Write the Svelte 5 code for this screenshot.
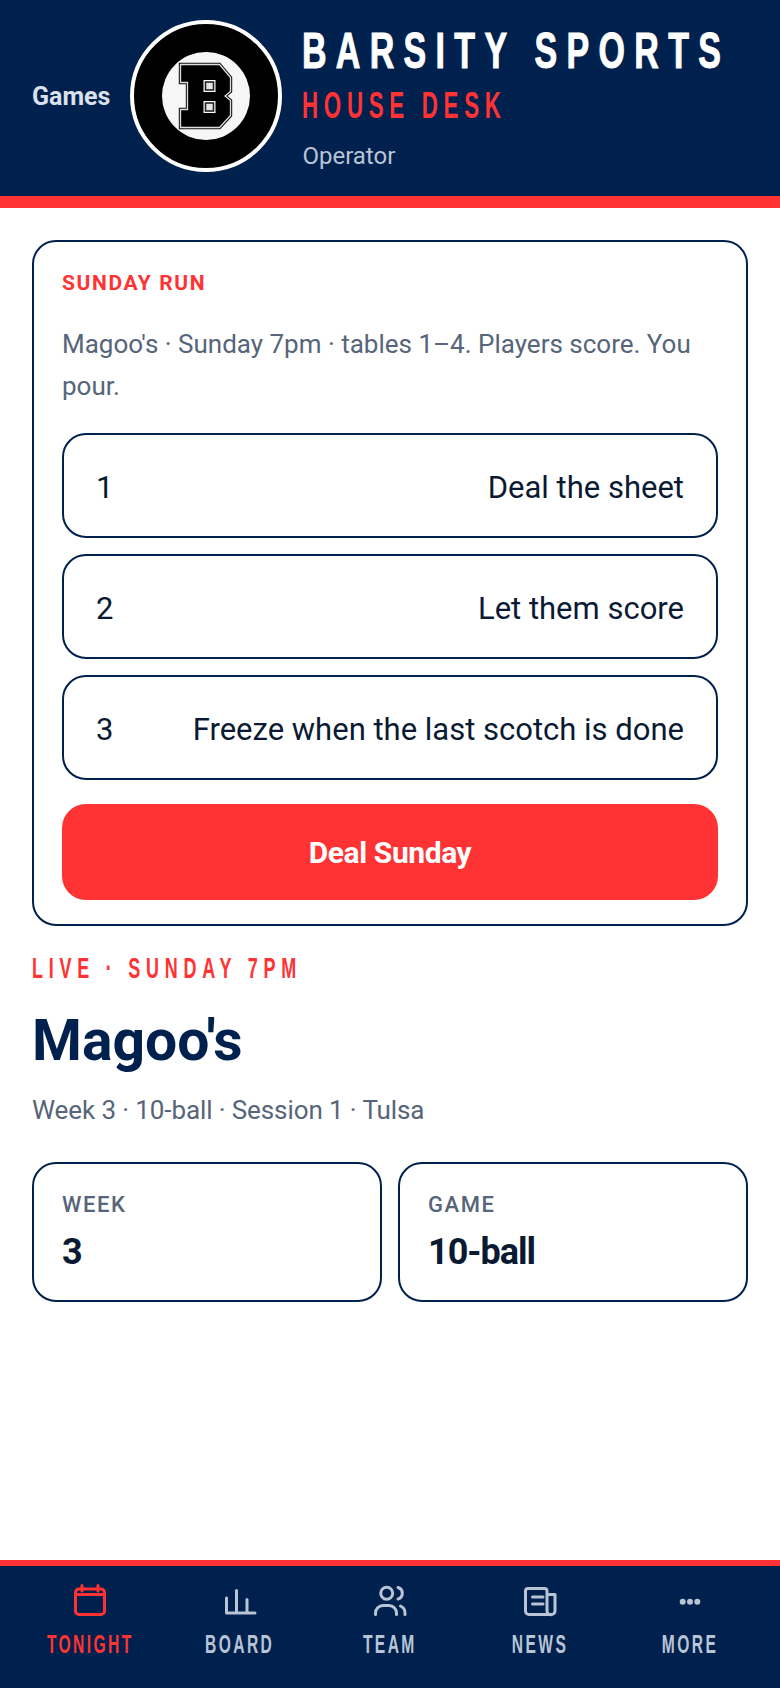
<script lang="ts">
	let steps = [
		{ n: '1', text: 'Deal the sheet' },
		{ n: '2', text: 'Let them score' },
		{ n: '3', text: 'Freeze when the last scotch is done' }
	];
	let stats = [
		{ label: 'WEEK', value: '3' },
		{ label: 'GAME', value: '10-ball' }
	];
	const bPath = 'M0 0H39L50 13V27L44.5 31.500L50 36V51L39 63H0V45H7V18H0Z';
</script>

<div class="page">
	<header class="top">
		<a class="back" href="/">Games</a>
		<div class="logo">
			<div class="logo-inner">
				<svg width="56" height="68" viewBox="-2.5 -2.5 56 68">
					<path class="b-edge" d={bPath} />
					<path class="b-line" d={bPath} />
					<rect class="hole-a" x="23" y="15.5" width="12" height="12" />
					<rect class="hole-b" x="24.2" y="16.7" width="9.6" height="9.6" />
					<rect class="hole-c" x="25.8" y="18.3" width="6.4" height="6.4" />
					<rect class="hole-a" x="23" y="36.5" width="12" height="12" />
					<rect class="hole-b" x="24.2" y="37.7" width="9.6" height="9.6" />
					<rect class="hole-c" x="25.8" y="39.3" width="6.4" height="6.4" />
				</svg>
			</div>
		</div>
		<div class="brand">
			<div class="title">BARSITY SPORTS</div>
			<div class="sub">HOUSE DESK</div>
			<div class="role">Operator</div>
		</div>
	</header>

	<main class="content">
		<section class="card">
			<div class="eyebrow">SUNDAY RUN</div>
			<p class="lede">Magoo's · Sunday 7pm · tables 1–4. Players score. You pour.</p>
			<div class="steps">
				{#each steps as step}
					<div class="step">
						<span>{step.n}</span>
						<span>{step.text}</span>
					</div>
				{/each}
			</div>
			<button class="cta">Deal Sunday</button>
		</section>

		<div class="live">LIVE · SUNDAY 7PM</div>
		<h1 class="venue">Magoo's</h1>
		<p class="meta">Week 3 · 10-ball · Session 1 · Tulsa</p>

		<div class="stats">
			{#each stats as stat}
				<div class="stat">
					<div class="stat-label">{stat.label}</div>
					<div class="stat-value">{stat.value}</div>
				</div>
			{/each}
		</div>
	</main>

	<nav class="tabs">
		<a class="tab active" href="/">
			<svg viewBox="0 0 36 36"><rect x="3.5" y="7" width="29" height="25.5" rx="3.5" /><path d="M3.5 12.5H32.5M10 3.5V9M26 3.5V9" /></svg>
			<span>TONIGHT</span>
		</a>
		<a class="tab" href="/">
			<svg viewBox="0 0 36 36"><path d="M4.5 16V31H33M14.5 8.5V31M25 17.5V31" /></svg>
			<span>BOARD</span>
		</a>
		<a class="tab" href="/">
			<svg viewBox="0 0 36 36"><circle cx="14.7" cy="11.3" r="6" /><path d="M3.5 32.5V31A7.5 7.5 0 0 1 11 23.5H17A7.5 7.5 0 0 1 24.5 31V32.5M26 5.5A6 6 0 0 1 26 17M28.5 24A7.5 7.5 0 0 1 33 31V32.5" /></svg>
			<span>TEAM</span>
		</a>
		<a class="tab" href="/">
			<svg viewBox="0 0 36 36"><path d="M25 12.5H33V29A3.5 3.5 0 0 1 29.5 32.5H7A3.5 3.5 0 0 1 3.5 29V9A2.5 2.5 0 0 1 6 6.5H22.5A2.5 2.5 0 0 1 25 9V29A3.5 3.5 0 0 0 29.5 32.5" /><path d="M10.5 15H21M10.5 22H21" /></svg>
			<span>NEWS</span>
		</a>
		<a class="tab" href="/">
			<svg viewBox="0 0 36 36"><circle class="dot" cx="10.7" cy="19.7" r="3" /><circle class="dot" cx="18" cy="19.7" r="3" /><circle class="dot" cx="25.3" cy="19.7" r="3" /></svg>
			<span>MORE</span>
		</a>
	</nav>
</div>

<style>
	:global(body) {
		background: #fff;
		font-family: Roboto, "Open Sans", sans-serif;
	}

	.page {
		height: 1688px;
		display: flex;
		flex-direction: column;
		--navy: #00214d;
		--red: #ff3333;
		--slate: #566579;
		--ink: #0b1a33;
		--condensed: "Liberation Sans", sans-serif;
	}

	.top {
		display: flex;
		align-items: center;
		gap: 20px;
		height: 208px;
		padding: 0 32px 4px;
		box-sizing: border-box;
		background: var(--navy);
		border-bottom: 12px solid var(--red);
	}

	.back {
		font-size: 25px;
		font-weight: 700;
		color: #dbe1ec;
		text-decoration: none;
	}

	.logo {
		width: 152px;
		height: 152px;
		box-sizing: border-box;
		flex: none;
		display: flex;
		align-items: center;
		justify-content: center;
		border-radius: 50%;
		background: #000;
		border: 4px solid #fff;
	}

	.logo-inner {
		width: 88px;
		height: 88px;
		display: flex;
		align-items: center;
		justify-content: center;
		border-radius: 50%;
		background: #f6f6f6;
	}

	.b-edge {
		fill: #000;
		stroke: #111;
		stroke-width: 3.4;
	}

	.b-line {
		fill: #000;
		stroke: #ddd;
		stroke-width: 1.3;
	}

	.hole-a {
		fill: #fff;
	}

	.hole-b {
		fill: #222;
	}

	.hole-c {
		fill: #e6e6e6;
	}

	.brand {
		display: flex;
		flex-direction: column;
		min-width: 0;
		padding-top: 6px;
		white-space: nowrap;
	}

	.title {
		font-family: var(--condensed);
		font-size: 50px;
		font-weight: 700;
		line-height: 50px;
		letter-spacing: 13.7px;
		-webkit-text-stroke: 1px #fff;
		color: #fff;
		transform: scaleX(0.68);
		transform-origin: left center;
	}

	.sub {
		margin-top: 10px;
		font-family: var(--condensed);
		font-size: 36px;
		font-weight: 700;
		line-height: 40px;
		letter-spacing: 9.2px;
		color: var(--red);
		transform: scaleX(0.62);
		transform-origin: left center;
	}

	.role {
		margin-top: 14px;
		font-size: 24px;
		line-height: 32px;
		color: #b9c4d6;
	}

	.content {
		flex: 1;
		padding: 32px 32px 0;
	}

	.card {
		padding: 27px 28px 24px;
		border: 2px solid var(--navy);
		border-radius: 24px;
	}

	.eyebrow {
		font-size: 21px;
		font-weight: 700;
		line-height: 28px;
		letter-spacing: 1.6px;
		color: var(--red);
	}

	.lede {
		margin: 26px 0 0;
		font-size: 26px;
		line-height: 42px;
		color: var(--slate);
	}

	.steps {
		display: flex;
		flex-direction: column;
		gap: 16px;
		margin-top: 26px;
	}

	.step {
		display: flex;
		justify-content: space-between;
		align-items: center;
		height: 105px;
		box-sizing: border-box;
		padding: 3px 32px 0;
		border: 2px solid var(--navy);
		border-radius: 24px;
		font-size: 31px;
		color: var(--ink);
	}

	.cta {
		display: block;
		width: 100%;
		height: 96px;
		margin-top: 24px;
		border: none;
		border-radius: 24px;
		background: var(--red);
		color: #fff;
		font-family: inherit;
		font-size: 30px;
		font-weight: 700;
		letter-spacing: -0.4px;
	}

	.live {
		margin-top: 24px;
		font-family: var(--condensed);
		font-size: 30px;
		font-weight: 700;
		line-height: 36px;
		letter-spacing: 9.6px;
		white-space: nowrap;
		color: var(--red);
		transform: scaleX(0.6);
		transform-origin: left center;
	}

	.venue {
		margin: 19px 0 0;
		font-size: 57px;
		font-weight: 700;
		line-height: 72px;
		color: var(--navy);
	}

	.meta {
		margin: 13px 0 0;
		font-size: 26px;
		line-height: 40px;
		letter-spacing: -0.1px;
		color: var(--slate);
	}

	.stats {
		display: grid;
		grid-template-columns: 1fr 1fr;
		gap: 16px;
		margin-top: 32px;
	}

	.stat {
		height: 140px;
		box-sizing: border-box;
		padding: 26px 28px;
		border: 2px solid var(--navy);
		border-radius: 24px;
	}

	.stat-label {
		font-size: 22px;
		font-weight: 500;
		line-height: 30px;
		letter-spacing: 1.6px;
		color: var(--slate);
	}

	.stat-value {
		margin-top: 10px;
		font-size: 36px;
		font-weight: 700;
		line-height: 44px;
		letter-spacing: -1px;
		color: var(--ink);
	}

	.tabs {
		display: grid;
		grid-template-columns: repeat(5, 1fr);
		height: 128px;
		box-sizing: border-box;
		padding: 16px 15px 0;
		background: var(--navy);
		border-top: 6px solid var(--red);
	}

	.tab {
		min-width: 0;
		display: flex;
		flex-direction: column;
		align-items: center;
		gap: 11px;
		font-family: var(--condensed);
		font-size: 26px;
		font-weight: 700;
		line-height: 30px;
		letter-spacing: 4px;
		color: #b9c4d6;
		text-decoration: none;
	}

	.tab span {
		white-space: nowrap;
		transform: scaleX(0.6);
	}

	.tab.active {
		color: var(--red);
	}

	.tab svg {
		width: 36px;
		height: 36px;
		fill: none;
		stroke: currentColor;
		stroke-width: 3;
		stroke-linecap: round;
		stroke-linejoin: round;
	}

	.tab .dot {
		fill: currentColor;
		stroke: none;
	}
</style>
